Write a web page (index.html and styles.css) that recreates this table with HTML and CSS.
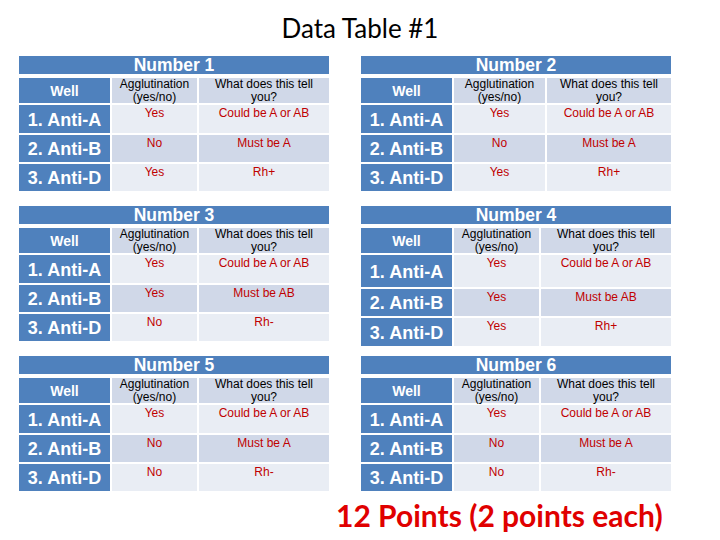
FILE: index.html
```html
<!DOCTYPE html>
<html>
<head>
<meta charset="utf-8">
<link rel="stylesheet" href="styles.css">
</head>
<body>
<h1 class="page-title">Data Table #1</h1>
<div class="tables">
  <section class="dt">
    <div class="dt-title">Number 1</div>
    <div class="dt-grid">
      <div class="well well-head">Well</div><div class="hd">Agglutination (yes/no)</div><div class="hd">What does this tell you?</div>
      <div class="well">1. Anti-A</div><div class="c lt">Yes</div><div class="c lt">Could be A or AB</div>
      <div class="well">2. Anti-B</div><div class="c dk">No</div><div class="c dk">Must be A</div>
      <div class="well">3. Anti-D</div><div class="c lt">Yes</div><div class="c lt">Rh+</div>
    </div>
  </section>
  <section class="dt dt-wide-mid">
    <div class="dt-title">Number 2</div>
    <div class="dt-grid">
      <div class="well well-head">Well</div><div class="hd">Agglutination (yes/no)</div><div class="hd">What does this tell you?</div>
      <div class="well">1. Anti-A</div><div class="c lt">Yes</div><div class="c lt">Could be A or AB</div>
      <div class="well">2. Anti-B</div><div class="c dk">No</div><div class="c dk">Must be A</div>
      <div class="well">3. Anti-D</div><div class="c lt">Yes</div><div class="c lt">Rh+</div>
    </div>
  </section>
  <section class="dt">
    <div class="dt-title">Number 3</div>
    <div class="dt-grid">
      <div class="well well-head">Well</div><div class="hd">Agglutination (yes/no)</div><div class="hd">What does this tell you?</div>
      <div class="well">1. Anti-A</div><div class="c lt">Yes</div><div class="c lt">Could be A or AB</div>
      <div class="well">2. Anti-B</div><div class="c dk">Yes</div><div class="c dk">Must be AB</div>
      <div class="well">3. Anti-D</div><div class="c lt">No</div><div class="c lt">Rh-</div>
    </div>
  </section>
  <section class="dt dt-tall">
    <div class="dt-title">Number 4</div>
    <div class="dt-grid">
      <div class="well well-head">Well</div><div class="hd">Agglutination (yes/no)</div><div class="hd">What does this tell you?</div>
      <div class="well">1. Anti-A</div><div class="c lt">Yes</div><div class="c lt">Could be A or AB</div>
      <div class="well">2. Anti-B</div><div class="c dk">Yes</div><div class="c dk">Must be AB</div>
      <div class="well">3. Anti-D</div><div class="c lt">Yes</div><div class="c lt">Rh+</div>
    </div>
  </section>
  <section class="dt">
    <div class="dt-title">Number 5</div>
    <div class="dt-grid">
      <div class="well well-head">Well</div><div class="hd">Agglutination (yes/no)</div><div class="hd">What does this tell you?</div>
      <div class="well">1. Anti-A</div><div class="c lt">Yes</div><div class="c lt">Could be A or AB</div>
      <div class="well">2. Anti-B</div><div class="c dk">No</div><div class="c dk">Must be A</div>
      <div class="well">3. Anti-D</div><div class="c lt">No</div><div class="c lt">Rh-</div>
    </div>
  </section>
  <section class="dt">
    <div class="dt-title">Number 6</div>
    <div class="dt-grid">
      <div class="well well-head">Well</div><div class="hd">Agglutination (yes/no)</div><div class="hd">What does this tell you?</div>
      <div class="well">1. Anti-A</div><div class="c lt">Yes</div><div class="c lt">Could be A or AB</div>
      <div class="well">2. Anti-B</div><div class="c dk">No</div><div class="c dk">Must be A</div>
      <div class="well">3. Anti-D</div><div class="c lt">No</div><div class="c lt">Rh-</div>
    </div>
  </section>
</div>
<p class="points">12 Points (2 points each)</p>
</body>
</html>
```
FILE: styles.css
```css
html, body {
  margin: 0;
  padding: 0;
  background: #ffffff;
}
body {
  width: 720px;
  height: 540px;
  overflow: hidden;
  font-family: "Liberation Sans", Arial, sans-serif;
}
.page-title {
  margin: 0;
  height: 56px;
  box-sizing: border-box;
  padding-top: 13px;
  font-family: Lato, "Open Sans", sans-serif;
  font-weight: 400;
  font-size: 26px;
  line-height: 30px;
  text-align: center;
  color: #000;
}
.tables {
  display: grid;
  grid-template-columns: 310px 310px;
  grid-auto-rows: 135px;
  column-gap: 32px;
  row-gap: 15px;
  padding-left: 19px;
}
.dt {
  display: flex;
  flex-direction: column;
  gap: 4px;
}
.dt-title {
  height: 18px;
  background: #4f81bd;
  color: #fff;
  font-weight: 700;
  font-size: 17.5px;
  line-height: 18px;
  text-align: center;
}
.dt-grid {
  display: grid;
  grid-template-columns: 91px 85px 130px;
  grid-template-rows: 25px 28px 27px 27px;
  gap: 2px;
}
.dt-wide-mid .dt-grid {
  grid-template-columns: 91px 91px 124px;
}
.dt-tall .dt-grid {
  grid-template-rows: 25px 32px 27px 28px;
}
.well {
  background: #4f81bd;
  color: #fff;
  font-weight: 700;
  font-size: 18px;
  display: flex;
  align-items: center;
  justify-content: center;
  padding-top: 2px;
  box-sizing: border-box;
}
.well-head {
  font-size: 14px;
  padding-top: 0;
}
.hd {
  background: #d0d8e8;
  color: #000;
  font-size: 12px;
  line-height: 13px;
  text-align: center;
  padding: 0 6px;
}
.c {
  color: #c00000;
  font-size: 12px;
  line-height: 13px;
  text-align: center;
  padding-top: 2px;
  box-sizing: border-box;
}
.lt {
  background: #e9edf4;
}
.dk {
  background: #d0d8e8;
}
.points {
  margin: 6px 0 0 0;
  padding-left: 336px;
  font-family: Lato, "Open Sans", sans-serif;
  font-weight: 700;
  font-size: 30px;
  line-height: 36px;
  color: #e00000;
}
```
